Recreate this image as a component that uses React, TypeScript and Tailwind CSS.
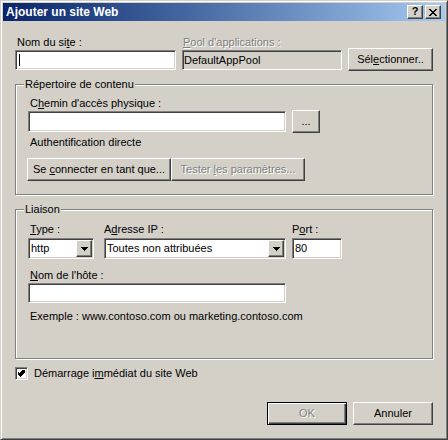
import React from "react";

const font = "font-['Tahoma','Liberation_Sans',sans-serif]";
const grayText = "text-[#808080] [text-shadow:1px_1px_0_#ffffff]";

function Edit({ className = "", disabled = false, children }: { className?: string; disabled?: boolean; children?: React.ReactNode }) {
  return (
    <div
      className={`border border-t-[#808080] border-l-[#808080] border-r-white border-b-white shadow-[inset_1px_1px_0_#404040,inset_-1px_-1px_0_#d4d0c8] ${disabled ? "bg-[#d4d0c8]" : "bg-white"} ${className}`}
    >
      {children}
    </div>
  );
}

function Btn({ className = "", children }: { className?: string; children?: React.ReactNode }) {
  return (
    <div className={`flex items-center justify-center border border-t-white border-l-white border-r-[#404040] border-b-[#404040] bg-[#d4d0c8] shadow-[inset_-1px_-1px_0_#808080] ${className}`}>
      {children}
    </div>
  );
}

function Combo({ className = "", value }: { className?: string; value: string }) {
  return (
    <Edit className={`flex p-[1px] ${className}`}>
      <div className="flex-1 pl-[1px] leading-[17px]">{value}</div>
      <Btn className="w-[16px] h-full">
        <svg width="7" height="4" viewBox="0 0 7 4" shapeRendering="crispEdges">
          <path d="M0 0h7v1h-1v1h-1v1h-1v1h-1v-1h-1v-1h-1v-1h-1z" fill="#000" />
        </svg>
      </Btn>
    </Edit>
  );
}

function Group({ title, className = "", children }: { title: string; className?: string; children?: React.ReactNode }) {
  return (
    <div className={`relative border border-[#808080] shadow-[1px_1px_0_#ffffff,inset_1px_1px_0_#ffffff] ${className}`}>
      <span className="absolute left-[8px] top-[-8px] px-[1px] bg-[#d4d0c8] leading-[14px]">{title}</span>
      {children}
    </div>
  );
}

export default function App() {
  return (
    <div className={`w-[448px] h-[440px] ${font} text-[11px] text-black`}>
      <div className="w-full h-full flex flex-col border border-t-[#d4d0c8] border-l-[#d4d0c8] border-r-[#404040] border-b-[#404040] bg-[#d4d0c8] p-[2px] shadow-[inset_1px_1px_0_#ffffff,inset_-1px_-1px_0_#808080]">
        {/* title bar */}
        <div className="h-[18px] flex items-center bg-linear-to-r from-[#0a246a] to-[#a6caf0] pl-[3px] pr-[4px]">
          <span className="flex-1 text-white font-bold text-[12px] leading-[18px]">Ajouter un site Web</span>
          <Btn className="w-[16px] h-[14px] text-[11px] font-bold leading-none pb-[1px]">?</Btn>
          <Btn className="w-[16px] h-[14px] ml-[2px]">
            <svg width="8" height="7" viewBox="0 0 8 7" shapeRendering="crispEdges">
              <path d="M0 0h2v1h1v1h2v-1h1v-1h2v1h-1v1h-1v1h-1v1h1v1h1v1h1v1h-2v-1h-1v-1h-2v1h-1v1h-2v-1h1v-1h1v-1h1v-1h-1v-1h-1v-1h-1z" fill="#000" />
            </svg>
          </Btn>
        </div>

        {/* body */}
        <div className="flex-1 flex flex-col pl-[12px] pr-[12px]">
          <div className="flex items-start pt-[14px]">
            <div className="w-[161px]">
              <div className="h-[14px] leading-[14px] pl-[2px]">
                Nom du si<u>t</u>e :
              </div>
              <Edit className="h-[20px] mt-[1px] flex items-center pl-[3px]">
                <div className="w-[1px] h-[12px] bg-black" />
              </Edit>
            </div>
            <div className="w-[160px] ml-[6px]">
              <div className={`h-[14px] leading-[14px] pl-[1px] ${grayText}`}>
                <u>P</u>ool d'applications :
              </div>
              <Edit disabled className="h-[20px] mt-[1px] pl-[1px] leading-[18px]">
                DefaultAppPool
              </Edit>
            </div>
            <Btn className="w-[85px] h-[23px] ml-[6px] mt-[13px]">
              <span>
                Sél<u>e</u>ctionner..
              </span>
            </Btn>
          </div>

          <Group title="Répertoire de contenu" className="mt-[13px] h-[111px]">
            <div className="pl-[11px] pt-[11px]">
              <div className="h-[14px] leading-[14px] pl-[3px]">
                C<u>h</u>emin d'accès physique :
              </div>
              <div className="flex items-start pl-[1px]">
                <Edit className="w-[258px] h-[21px] mt-[1px]" />
                <Btn className="w-[28px] h-[23px] ml-[6px]">...</Btn>
              </div>
              <div className="h-[14px] leading-[14px] mt-[2px] pl-[3px]">Authentification directe</div>
              <div className="flex mt-[9px]">
                <Btn className="w-[144px] h-[23px]">
                  <span>
                    Se <u>c</u>onnecter en tant que...
                  </span>
                </Btn>
                <Btn className="w-[134px] h-[23px]">
                  <span className={grayText}>
                    Tester <u>l</u>es paramètres...
                  </span>
                </Btn>
              </div>
            </div>
          </Group>

          <Group title="Liaison" className="mt-[14px] h-[150px]">
            <div className="pl-[12px] pt-[12px]">
              <div className="flex items-start">
                <div className="w-[66px]">
                  <div className="h-[14px] leading-[14px] pl-[2px]">
                    <u>T</u>ype :
                  </div>
                  <Combo className="h-[21px] mt-[2px]" value="http" />
                </div>
                <div className="w-[182px] ml-[10px]">
                  <div className="h-[14px] leading-[14px]">
                    A<u>d</u>resse IP :
                  </div>
                  <Combo className="h-[21px] mt-[2px]" value="Toutes non attribuées" />
                </div>
                <div className="w-[50px] ml-[6px]">
                  <div className="h-[14px] leading-[14px]">
                    P<u>o</u>rt :
                  </div>
                  <Edit className="h-[21px] mt-[2px] pl-[2px] leading-[19px]">80</Edit>
                </div>
              </div>
              <div className="h-[14px] leading-[14px] mt-[9px] pl-[2px]">
                <u>N</u>om de l'hôte :
              </div>
              <Edit className="w-[258px] h-[20px] mt-[1px]" />
              <div className="h-[14px] leading-[14px] mt-[6px] pl-[2px]">
                Exemple : www.contoso.com ou marketing.contoso.com
              </div>
            </div>
          </Group>

          <div className="flex items-center h-[13px] mt-[8px]">
            <Edit className="w-[13px] h-[13px] flex items-center justify-center">
              <svg width="7" height="7" viewBox="0 0 7 7" shapeRendering="crispEdges">
                <path d="M6 0h1v3h-1v1h-1v1h-1v1h-1v1h-1v-1h-1v-1h-1v-1h-1v-3h1v1h1v1h1v-1h1v-1h1v-1h1z" fill="#000" />
              </svg>
            </Edit>
            <span className="ml-[6px] leading-[13px]">
              Démarrage i<u>m</u>médiat du site Web
            </span>
          </div>

          <div className="flex justify-end mt-[22px]">
            <div className="w-[80px] h-[23px] flex items-center justify-center border border-black bg-[#d4d0c8] shadow-[inset_1px_1px_0_#ffffff,inset_-1px_-1px_0_#404040,inset_-2px_-2px_0_#808080]">
              <span className={grayText}>OK</span>
            </div>
            <Btn className="w-[80px] h-[23px] ml-[6px]">Annuler</Btn>
          </div>
        </div>
      </div>
    </div>
  );
}
